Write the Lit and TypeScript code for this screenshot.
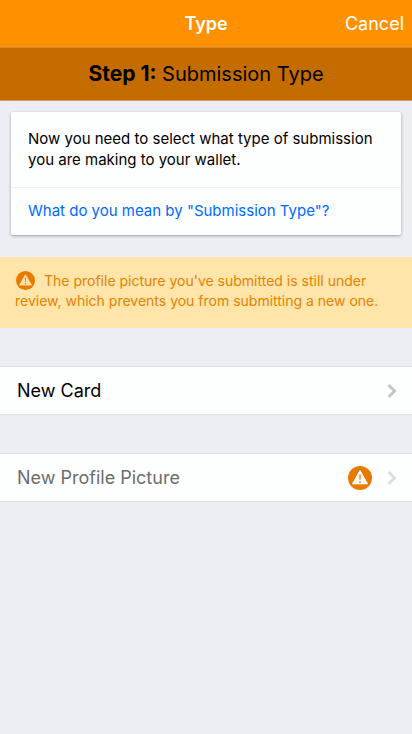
import { LitElement, html, css } from "lit";
import { customElement } from "lit/decorators.js";

const warningIcon = (cls: string) => html`<svg class=${cls} viewBox="0 0 24 24" aria-hidden="true">
    <circle cx="12" cy="12" r="12" fill="currentColor" />
    <path d="M12 4.6 L19.5 17.8 H4.5 Z" fill="var(--mark)" stroke="var(--mark)" stroke-width="1" stroke-linejoin="round" />
    <path d="M11.2 8.6 H12.8 L12.4 14.2 H11.6 Z" fill="currentColor" />
    <circle cx="12" cy="16.1" r="0.9" fill="currentColor" />
  </svg>`;

const chevron = html`<svg class="chevron" viewBox="0 0 10 14" aria-hidden="true">
    <path d="M1.5 1 L7.6 7 L1.5 13" fill="none" stroke="currentColor" stroke-width="2.8" />
  </svg>`;

@customElement("app-root")
export class AppRoot extends LitElement {
  static styles = css`
    :host {
      display: block;
      min-height: 100vh;
      background: #edeef4;
      color: #000;
      font-family: Inter, "Liberation Sans", sans-serif;
    }
    * {
      box-sizing: border-box;
    }
    button {
      margin: 0;
      border: 0;
      background: none;
      font: inherit;
      color: inherit;
      cursor: pointer;
    }
    h1,
    h2,
    p {
      margin: 0;
    }
    .bar {
      display: grid;
      grid-template-columns: 1fr auto 1fr;
      align-items: center;
      height: 48px;
      padding: 0 8px;
      background: #ff9100;
      border-bottom: 1px solid #d68a3c;
      color: #fff;
    }
    .title {
      grid-column: 2;
      font-size: 18px;
      line-height: 24px;
      font-weight: 600;
    }
    .cancel {
      justify-self: end;
      padding: 0;
      font-size: 18px;
      line-height: 24px;
    }
    .step {
      height: 53px;
      background: #c46c00;
      border-bottom: 1px solid #d9986a;
      font-size: 20px;
      line-height: 52px;
      font-weight: 400;
      text-align: center;
    }
    .step strong {
      font-size: 21px;
      font-weight: 700;
    }
    .card {
      margin: 11px 11px 0;
      background: #fdfefe;
      border-radius: 2px;
      box-shadow: 0 1px 3px rgba(0, 0, 0, 0.35);
      font-size: 15px;
      line-height: 21px;
    }
    .intro {
      padding: 16px 16px 17px 17px;
      border-bottom: 1px solid #f0f1f4;
    }
    .help {
      display: block;
      padding: 12px 16px 14px 17px;
      color: #006aff;
      text-decoration: none;
    }
    .alert {
      margin-top: 22px;
      padding: 14px 15px 17px;
      background: #ffe5a9;
      color: #e68200;
      font-size: 14px;
      line-height: 20px;
    }
    .inline-icon {
      width: 19px;
      height: 19px;
      margin: 0 9px 0 1px;
      vertical-align: -4px;
      color: #e87a00;
      --mark: #ffe5a9;
    }
    .row {
      display: flex;
      align-items: center;
      width: 100%;
      height: 49px;
      margin-top: 38px;
      padding: 0 15px 0 17px;
      background: #fdfefe;
      border-top: 1px solid #e0e0e5;
      border-bottom: 1px solid #e0e0e5;
      font-size: 18px;
      line-height: 24px;
      text-align: left;
    }
    .label {
      flex: 1;
    }
    .row:disabled {
      color: #6d6d6d;
      cursor: default;
    }
    .row-icon {
      width: 24px;
      height: 24px;
      margin-right: 15px;
      color: #e87a00;
      --mark: #fff;
    }
    .chevron {
      width: 10px;
      height: 14px;
      color: #c4c4ca;
    }
    .row:disabled .chevron {
      color: #dddde1;
    }
  `;

  render() {
    return html`
      <header class="bar">
        <h1 class="title">Type</h1>
        <button class="cancel" type="button">Cancel</button>
      </header>
      <main>
        <h2 class="step"><strong>Step 1:</strong> Submission Type</h2>
        <section class="card">
          <p class="intro">Now you need to select what type of submission you are making to your wallet.</p>
          <a class="help" href="#submission-type">What do you mean by "Submission Type"?</a>
        </section>
        <p class="alert" role="status">
          ${warningIcon("inline-icon")}The profile picture you've submitted is still under review, which prevents you
          from submitting a new one.
        </p>
        <button class="row" type="button"><span class="label">New Card</span>${chevron}</button>
        <button class="row" type="button" disabled>
          <span class="label">New Profile Picture</span>${warningIcon("row-icon")}${chevron}
        </button>
      </main>
    `;
  }
}
